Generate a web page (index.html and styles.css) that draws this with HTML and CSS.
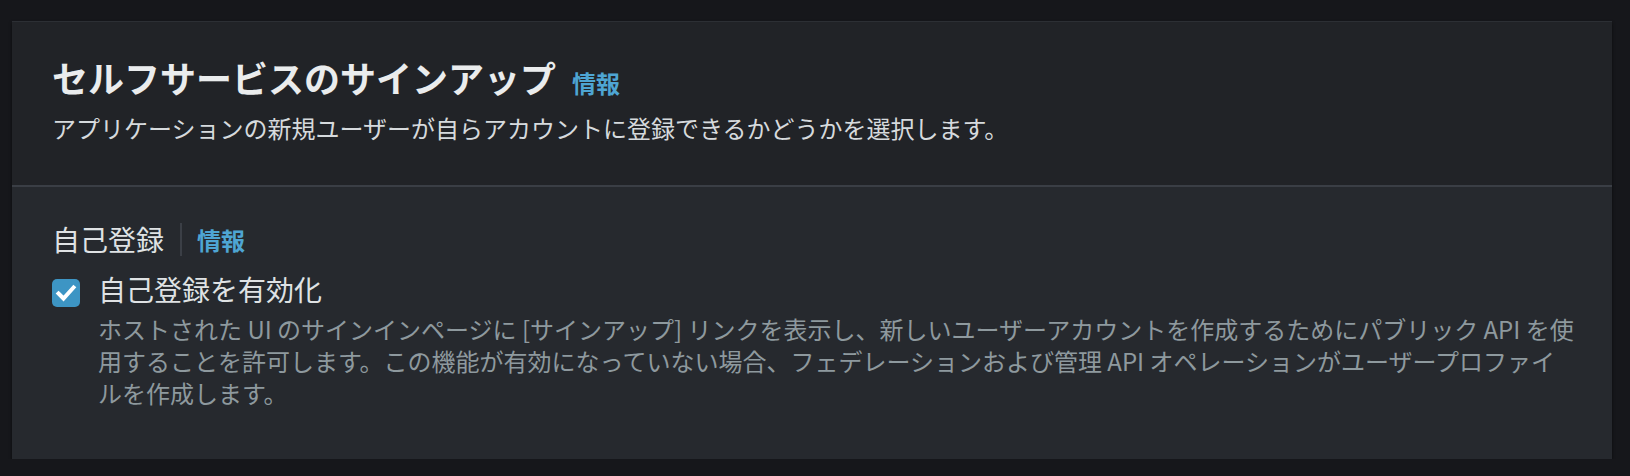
FILE: index.html
```html
<!DOCTYPE html>
<html lang="ja">
<head>
<meta charset="utf-8">
<title>セルフサービスのサインアップ</title>
<link rel="stylesheet" href="styles.css">
</head>
<body>
<div class="page">
  <section class="card">
    <header class="card-header">
      <h2 class="title">セルフサービスのサインアップ<a class="info title-info" href="#">情報</a></h2>
      <p class="subtitle">アプリケーションの新規ユーザーが自らアカウントに登録できるかどうかを選択します。</p>
    </header>
    <div class="card-body">
      <div class="field-label">
        <span class="label-text">自己登録</span>
        <a class="info label-info" href="#">情報</a>
      </div>
      <div class="check-row">
        <span class="checkbox" role="checkbox" aria-checked="true">
          <svg viewBox="0 0 28 28" width="28" height="28" aria-hidden="true">
            <path d="M6.5 14.5 L11.5 19.5 L21.5 8.5" fill="none" stroke="#ffffff" stroke-width="4" stroke-linecap="square" stroke-linejoin="miter"/>
          </svg>
        </span>
        <div class="check-text">
          <div class="check-label">自己登録を有効化</div>
          <p class="check-desc">ホストされた UI のサインインページに [サインアップ] リンクを表示し、新しいユーザーアカウントを作成するためにパブリック API を使<br>用することを許可します。この機能が有効になっていない場合、フェデレーションおよび管理 API オペレーションがユーザープロファイ<br>ルを作成します。</p>
        </div>
      </div>
    </div>
  </section>
</div>
</body>
</html>
```

FILE: styles.css
```css
* { box-sizing: border-box; }

html, body {
  margin: 0;
  padding: 0;
  background: #16171b;
  font-family: "Noto Sans CJK JP", "Noto Sans", sans-serif;
}

.page {
  padding: 21px 18px 0 12px;
}

.card {
  width: 1600px;
  background: #26292e;
  border-top: 1px solid #2c2f34;
  box-shadow: 0 2px 3px rgba(0, 0, 0, 0.55);
}

.card-header {
  background: #212327;
  padding: 33px 40px 41px 40px;
  border-bottom: 2px solid #3a3e45;
}

.title {
  margin: 0;
  font-size: 36px;
  line-height: 44px;
  font-weight: 700;
  color: #eaeced;
}

.info {
  color: #4ea5d3;
  font-weight: 700;
  font-size: 24px;
  text-decoration: none;
}

.title-info {
  margin-left: 16px;
  line-height: 24px;
}

.subtitle {
  margin: 13px 0 0 0;
  font-size: 24px;
  line-height: 32px;
  color: #d6dadd;
}

.card-body {
  padding: 34px 20px 50px 40px;
}

.field-label {
  display: flex;
  align-items: center;
  height: 36px;
}

.label-text {
  font-size: 28px;
  line-height: 36px;
  color: #dfe2e4;
}

.label-info {
  margin-left: 16px;
  padding-left: 15px;
  border-left: 2px solid #3b3f46;
  line-height: 33px;
}

.check-row {
  display: flex;
  align-items: flex-start;
  margin-top: 14px;
}

.checkbox {
  flex: none;
  width: 28px;
  height: 28px;
  margin-top: 8px;
  border-radius: 5px;
  background: #3d95c4;
  display: flex;
}

.check-text {
  margin-left: 18px;
  flex: 1;
}

.check-label {
  font-size: 28px;
  line-height: 36px;
  color: #dfe2e4;
}

.check-desc {
  margin: 6px 0 0 0;
  font-size: 24px;
  line-height: 32px;
  color: #8e999e;
}
```
